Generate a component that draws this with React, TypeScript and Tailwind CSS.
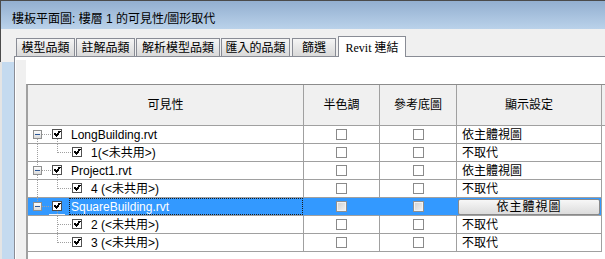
import React from "react";

type Row = {
  kind: "parent" | "child";
  label: string;
  display: string;
  pos?: "first" | "mid" | "last";
  lastChild?: boolean;
  outer?: boolean;
  selected?: boolean;
};

const rows: Row[] = [
  { kind: "parent", label: "LongBuilding.rvt", pos: "first", display: "依主體視圖" },
  { kind: "child", label: "1(<未共用>)", lastChild: true, outer: true, display: "不取代" },
  { kind: "parent", label: "Project1.rvt", pos: "mid", display: "依主體視圖" },
  { kind: "child", label: "4 (<未共用>)", lastChild: true, outer: true, display: "不取代" },
  { kind: "parent", label: "SquareBuilding.rvt", pos: "last", selected: true, display: "依主體視圖" },
  { kind: "child", label: "2 (<未共用>)", lastChild: false, outer: false, display: "不取代" },
  { kind: "child", label: "3 (<未共用>)", lastChild: true, outer: false, display: "不取代" },
];

const tabs = [
  { label: "模型品類", w: "w-[59px]", ml: "ml-0" },
  { label: "註解品類", w: "w-[59px]", ml: "ml-[1px]" },
  { label: "解析模型品類", w: "w-[84px]", ml: "ml-[1px]" },
  { label: "匯入的品類", w: "w-[69px]", ml: "ml-[1px]" },
  { label: "篩選", w: "w-[44px]", ml: "ml-[2px]" },
];

const DOT = "#a0a0a0";

const TreeCheck = ({ x }: { x: number }) => (
  <g>
    <rect x={x + 0.5} y={3.5} width={9} height={9} fill="#fff" stroke="#505050" />
    <polyline points={`${x + 2.5},7.5 ${x + 4.5},9.8 ${x + 8},5`} fill="none" stroke="#000" strokeWidth={1.9} />
  </g>
);

const TreeLines = ({ row }: { row: Row }) => {
  if (row.kind === "parent") {
    return (
      <svg width={43} height={17} className="shrink-0" shapeRendering="crispEdges">
        {row.pos !== "first" && <line x1={9.5} y1={0} x2={9.5} y2={5} stroke={DOT} strokeDasharray="1 1" />}
        {row.pos !== "last" && <line x1={9.5} y1={13} x2={9.5} y2={17} stroke={DOT} strokeDasharray="1 1" />}
        <line x1={14} y1={8.5} x2={24} y2={8.5} stroke={DOT} strokeDasharray="1 1" />
        <line x1={29.5} y1={13} x2={29.5} y2={17} stroke={DOT} strokeDasharray="1 1" />
        <defs>
          <linearGradient id="mbox" x1="0" y1="0" x2="0" y2="1">
            <stop offset="0" stopColor="#ffffff" />
            <stop offset="1" stopColor="#d8d8d8" />
          </linearGradient>
        </defs>
        <rect x={5.5} y={4.5} width={8} height={8} fill="url(#mbox)" stroke="#8e8f8f" />
        <rect x={7} y={8} width={5} height={1} fill="#2b5797" />
        <TreeCheck x={24} />
        {row.selected && <line x1={21} y1={16.5} x2={37} y2={16.5} stroke="#e8f2ff" />}
      </svg>
    );
  }
  return (
    <svg width={63} height={17} className="shrink-0" shapeRendering="crispEdges">
      {row.outer && <line x1={9.5} y1={0} x2={9.5} y2={17} stroke={DOT} strokeDasharray="1 1" />}
      <line x1={29.5} y1={0} x2={29.5} y2={row.lastChild ? 9 : 17} stroke={DOT} strokeDasharray="1 1" />
      <line x1={30} y1={8.5} x2={44} y2={8.5} stroke={DOT} strokeDasharray="1 1" />
      <TreeCheck x={44} />
    </svg>
  );
};

const Box = ({ dim }: { dim?: boolean }) =>
  dim ? (
    <span className="inline-block w-[11px] h-[11px] border border-[#8f8f8f] bg-linear-to-br from-[#cfcfcf] to-[#f4f4f4] shadow-[inset_0_0_0_1px_#f2f2f2]" />
  ) : (
    <span className="inline-block w-[11px] h-[11px] border border-[#8a8a8a] bg-white" />
  );

export default function App() {
  return (
    <div className="w-[605px] h-[259px] overflow-hidden bg-[#f0f0f0] flex flex-col text-[12px] text-black font-['Liberation_Sans','Noto_Sans_CJK_TC',sans-serif]">
      {/* title bar */}
      <div className="h-[29px] shrink-0 border-t border-l border-[#4b4b4b] bg-linear-to-b from-[#93afd0] to-[#bad2ea] flex items-center pt-[7px] pl-[11px] leading-[16px]">
        樓板平面圖: 樓層 1 的可見性/圖形取代
      </div>

      <div className="flex flex-1 min-h-0">
        <div className="w-[14px] shrink-0 flex flex-col">
          <div className="h-[33px] border-l border-[#4b4b4b] bg-[#f0f0f0]" />
          <div className="flex-1 border-l-2 border-[#e4e4e4] bg-[#c4daef]" />
        </div>

        <div className="flex-1 min-w-0 flex flex-col">
          {/* tabs */}
          <div className="h-[27px] shrink-0 flex items-end pl-[2px]">
            {tabs.map((t) => (
              <div
                key={t.label}
                className={`${t.w} ${t.ml} h-[18px] border border-b-0 border-[#898c95] bg-linear-to-b from-[#f5f5f5] to-[#d9d9d9] flex items-center justify-center leading-[16px]`}
              >
                {t.label}
              </div>
            ))}
            <div className="relative z-10 ml-[2px] mb-[-1px] w-[68px] h-[21px] border border-b-0 border-[#898c95] bg-white flex items-start justify-center pt-[3px] leading-[16px] font-['Liberation_Serif','Noto_Sans_CJK_TC',serif]">
              Revit 連結
            </div>
          </div>

          {/* tab panel */}
          <div className="flex-1 min-h-0 flex border-l border-t border-[#898c95] bg-white">
            <div className="w-[11px] shrink-0 flex flex-col pt-[3px]">
              <div className="flex-1 ml-[1px] bg-[#f0f0f0]" />
            </div>
            <div className="flex-1 min-w-0 flex flex-col">
              <div className="h-[27px] shrink-0" />
              <div className="flex-1 border-l-2 border-t border-[#a0a0a0] border-t-[#8c8c8c]">
                {/* header */}
                <div className="grid grid-cols-[276px_76px_77px_145px_1fr] h-[41px] bg-[#f0f0f0] border-b border-[#a0a0a0]">
                  <div className="border-r border-[#a0a0a0] flex items-center justify-center">可見性</div>
                  <div className="border-r border-[#a0a0a0] flex items-center justify-center">半色調</div>
                  <div className="border-r border-[#a0a0a0] flex items-center justify-center">參考底圖</div>
                  <div className="border-r border-[#a0a0a0] flex items-center justify-center">顯示設定</div>
                  <div />
                </div>

                {/* rows */}
                {rows.map((r) => {
                  const line = r.selected ? "border-[#3399ff]" : "border-[#a0a0a0]";
                  return (
                    <div key={r.label} className="grid grid-cols-[276px_76px_77px_145px_1fr] h-[18px]">
                      <div className={`flex items-center border-b border-r border-[#a0a0a0] ${r.selected ? "bg-[#3399ff] text-white border-r-[#3399ff]" : "bg-white"}`}>
                        <TreeLines row={r} />
                        {r.selected ? (
                          <span className="self-stretch flex items-center flex-1 -ml-[2px] pl-[2px] outline-1 outline-dotted outline-[#1a1a1a] -outline-offset-1 leading-[16px]">
                            {r.label}
                          </span>
                        ) : (
                          <span className="leading-[16px] whitespace-nowrap">{r.label}</span>
                        )}
                      </div>
                      <div className={`flex items-center justify-center border-b border-r ${line} border-b-[#a0a0a0] ${r.selected ? "bg-[#3399ff]" : "bg-white"}`}>
                        <Box dim={r.selected} />
                      </div>
                      <div className={`flex items-center justify-center border-b border-r ${line} border-b-[#a0a0a0] ${r.selected ? "bg-[#3399ff]" : "bg-white"}`}>
                        <Box dim={r.selected} />
                      </div>
                      <div className={`flex items-center border-b border-r border-[#a0a0a0] ${r.selected ? "bg-[#3399ff] px-[1px]" : "bg-white pl-[5px]"}`}>
                        {r.selected ? (
                          <div className="w-full h-[16px] border border-[#8a8a8a] rounded-[2px] bg-linear-to-b from-[#f7f7f7] to-[#dcdcdc] flex items-center justify-center leading-[14px] tracking-[1px]">
                            {r.display}
                          </div>
                        ) : (
                          <span className="leading-[16px]">{r.display}</span>
                        )}
                      </div>
                      <div className="bg-white" />
                    </div>
                  );
                })}
              </div>
            </div>
          </div>
        </div>
      </div>
    </div>
  );
}
